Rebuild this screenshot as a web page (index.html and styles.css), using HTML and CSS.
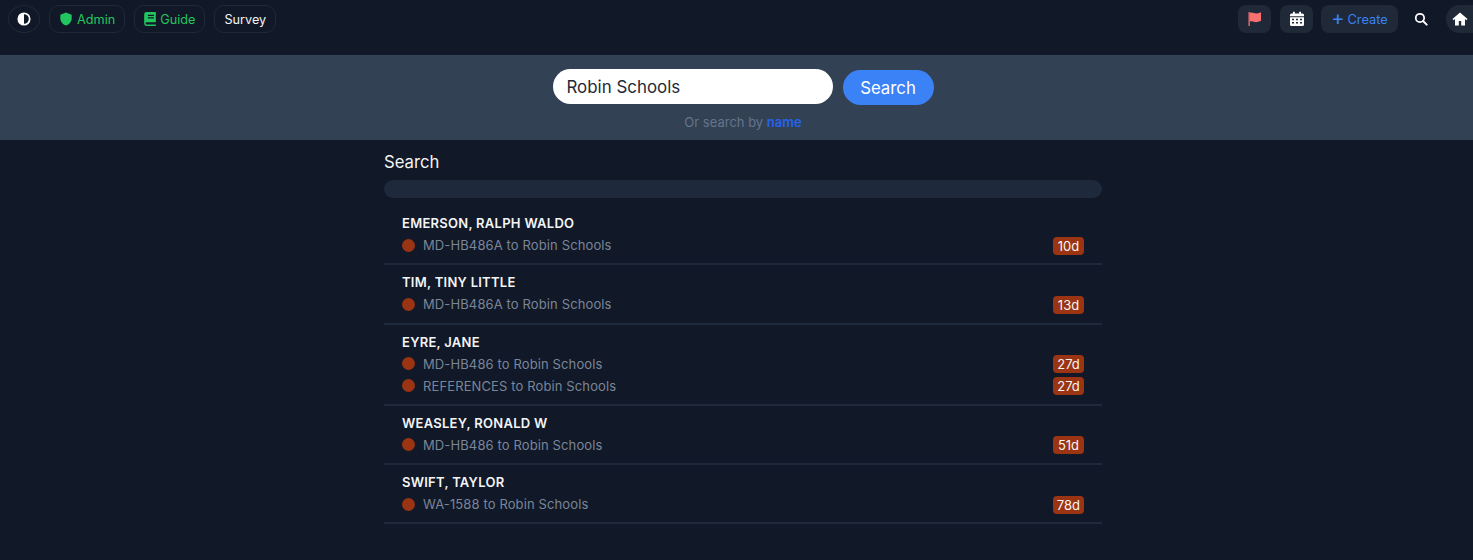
FILE: index.html
```html
<!DOCTYPE html>
<html>
<head>
    <meta charset="utf-8" />
    <title>Search</title>
    <link rel="stylesheet" href="styles.css">
</head>
<body>
    <nav class="topbar">
        <div class="nav-group">
            <button class="pill pill-round" type="button">
                <svg class="icon" viewBox="0 0 16 16"><circle cx="8" cy="8" r="6.500" fill="none" stroke="#fff" stroke-width="2"/><path d="M8 1.500a6.500 6.500 0 0 0 0 13z" fill="#fff"/></svg>
            </button>
            <a class="pill pill-green">
                <svg class="icon" viewBox="0 0 16 16"><path d="M8 .5l6.500 2.500v4.500c0 3.800-2.800 6.700-6.500 8-3.700-1.300-6.500-4.200-6.500-8V3z" fill="#22c55e"/></svg>
                Admin
            </a>
            <a class="pill pill-green">
                <svg class="icon icon-book" viewBox="1.500 .5 12.500 15"><path d="M4 .5h10v11H4.200a1.200 1.200 0 0 0 0 2.400H14v1.600H4A2.800 2.800 0 0 1 1.500 13V3A2.500 2.500 0 0 1 4 .5zm1.500 3v1.200h6.500V3.500zm0 2.700v1.200h6.500V6.200z" fill="#22c55e" fill-rule="evenodd"/></svg>
                Guide
            </a>
            <a class="pill">Survey</a>
        </div>
        <div class="nav-group">
            <button class="tool" type="button">
                <svg class="icon icon-lg" viewBox="0 0 16 16"><path d="M1.500 1h1.300v14H1.500z" fill="#f87171"/><path d="M2.800 2c2.500-1.300 4.700.9 7.200.4 1.400-.2 2.700-.6 4-1.200v8.600c-1.300.7-2.600 1.100-4 1.300-2.500.4-4.700-1.700-7.200-.5z" fill="#f87171"/></svg>
            </button>
            <button class="tool" type="button">
                <svg class="icon icon-lg" viewBox="0 0 16 16"><path d="M4 .8h1.800v1.700h4.400V.8H12v1.700h1.500A1.500 1.500 0 0 1 15 4v1.300H1V4a1.500 1.500 0 0 1 1.500-1.500H4zM1 6.300h14v7.200a1.500 1.500 0 0 1-1.500 1.500h-11A1.500 1.500 0 0 1 1 13.500zm2 1.500v1.500h2V7.800zm4 0v1.500h2V7.800zm4 0v1.500h2V7.800zm-8 3.200v1.500h2V11zm4 0v1.500h2V11zm4 0v1.500h2V11z" fill="#fff" fill-rule="evenodd"/></svg>
            </button>
            <a class="tool tool-create"><span class="plus">+</span> Create</a>
            <button class="tool tool-plain" type="button">
                <svg class="icon" viewBox="0 0 16 16"><circle cx="6.800" cy="6.800" r="4.800" fill="none" stroke="#fff" stroke-width="2"/><path d="M10.300 10.300l4.200 4.200" stroke="#fff" stroke-width="2.200" stroke-linecap="round"/></svg>
            </button>
            <button class="tool tool-home" type="button">
                <svg class="icon icon-lg" viewBox="0 0 16 16"><path d="M8 1.500L.5 8l1 1.200L3 8v6.500h3.800V10h2.400v4.500H13V8l1.500 1.200 1-1.200z" fill="#fff"/></svg>
            </button>
        </div>
    </nav>

    <section class="banner">
        <form class="search-form">
            <input class="search-input" type="text" value="Robin Schools">
            <button class="search-btn" type="button">Search</button>
        </form>
        <p class="search-alt">Or search by <a>name</a></p>
    </section>

    <main class="results">
        <h2>Search</h2>
        <div class="progress"></div>

        <div class="result">
            <div class="student">EMERSON, RALPH WALDO</div>
            <div class="line"><span class="dot"></span><span class="form-name">MD-HB486A to Robin Schools</span><span class="age">10d</span></div>
        </div>
        <div class="result">
            <div class="student">TIM, TINY LITTLE</div>
            <div class="line"><span class="dot"></span><span class="form-name">MD-HB486A to Robin Schools</span><span class="age">13d</span></div>
        </div>
        <div class="result">
            <div class="student">EYRE, JANE</div>
            <div class="line"><span class="dot"></span><span class="form-name">MD-HB486 to Robin Schools</span><span class="age">27d</span></div>
            <div class="line"><span class="dot"></span><span class="form-name">REFERENCES to Robin Schools</span><span class="age">27d</span></div>
        </div>
        <div class="result">
            <div class="student">WEASLEY, RONALD W</div>
            <div class="line"><span class="dot"></span><span class="form-name">MD-HB486 to Robin Schools</span><span class="age">51d</span></div>
        </div>
        <div class="result">
            <div class="student">SWIFT, TAYLOR</div>
            <div class="line"><span class="dot"></span><span class="form-name">WA-1588 to Robin Schools</span><span class="age">78d</span></div>
        </div>
    </main>
</body>
</html>
```

FILE: styles.css
```css
* {
    padding: 0;
    margin: 0;
    box-sizing: border-box;
}

body {
    background-color: #111827;
    color: #fff;
    font-family: Inter, "Liberation Sans", sans-serif;
    overflow: hidden;
}

.topbar {
    height: 55px;
    padding: 5px 0 0 8px;
    display: flex;
    justify-content: space-between;
    align-items: flex-start;
}

.nav-group {
    display: flex;
    gap: 9px;
}

.icon {
    width: 14px;
    height: 14px;
    flex: none;
}

.icon-lg {
    width: 16px;
    height: 16px;
}

.icon-book {
    width: 12px;
}

.pill {
    height: 28px;
    padding: 0 9px;
    display: flex;
    align-items: center;
    gap: 4px;
    background: transparent;
    border: 1px solid #1f2937;
    border-radius: 10px;
    color: #f3f4f6;
    font-size: 12.700px;
}

.pill-round {
    width: 32px;
    justify-content: center;
    border-radius: 50%;
    padding: 0;
}

.pill-green {
    color: #22c55e;
}

.tool {
    height: 28px;
    width: 33px;
    display: flex;
    align-items: center;
    justify-content: center;
    background-color: #1f2937;
    border: 0;
    border-radius: 8px;
}

.tool-create {
    width: 77px;
    margin-left: -1px;
    gap: 3px;
    color: #3b82f6;
    font-size: 12.800px;
}

.plus {
    font-size: 20px;
    line-height: 18px;
    margin-top: -2px;
}

.tool-plain {
    background: transparent;
    width: 30px;
    margin-right: 1px;
    margin-left: -1px;
}

.tool-home {
    border-radius: 50% 0 0 50%;
    width: 27px;
    justify-content: flex-start;
    padding-left: 6px;
}

.banner {
    height: 85px;
    background-color: #334155;
    padding-top: 14px;
    display: flex;
    flex-direction: column;
    align-items: center;
}

.search-form {
    display: flex;
    align-items: flex-start;
    gap: 10px;
    margin-left: 13px;
}

.search-input {
    width: 280px;
    height: 35px;
    padding: 0 14px;
    background-color: #fff;
    border: 0;
    border-radius: 18px;
    color: #1f2937;
    font-family: inherit;
    font-size: 16.900px;
}

.search-btn {
    width: 91px;
    height: 35px;
    margin-top: 1px;
    background-color: #3b82f6;
    border: 0;
    border-radius: 18px;
    color: #fff;
    font-family: inherit;
    font-size: 16.800px;
}

.search-alt {
    margin-top: 10px;
    margin-left: 13px;
    color: #64748b;
    font-size: 13px;
    line-height: 15px;
}

.search-alt a {
    color: #2563eb;
    font-weight: 600;
}

.results {
    width: 731px;
    margin: 0 auto;
    padding: 12px 0 0 13px;
}

.results h2 {
    font-size: 16.700px;
    font-weight: 400;
    line-height: 21px;
    color: #f3f4f6;
}

.progress {
    height: 18px;
    margin-top: 7px;
    margin-bottom: 8px;
    background-color: #1e293b;
    border-radius: 9px;
}

.result {
    padding: 7px 18px 7.250px;
    border-bottom: 2px solid #1e293b;
}

.student {
    margin-bottom: 1px;
    font-size: 13px;
    font-weight: 600;
    line-height: 20px;
    color: #f3f4f6;
    letter-spacing: .27px;
}

.line {
    height: 22px;
    display: flex;
    align-items: center;
    gap: 8px;
    font-size: 13px;
}

.dot {
    width: 13px;
    height: 13px;
    background-color: #9a3412;
    border-radius: 50%;
}

.form-name {
    flex: 1;
    color: #7a8699;
    letter-spacing: .12px;
}

.age {
    min-width: 31px;
    height: 18px;
    padding: 0 4px;
    margin-top: 1px;
    background-color: #9a3412;
    border-radius: 4px;
    color: #f3f4f6;
    font-size: 13px;
    line-height: 18px;
    text-align: center;
}
```
